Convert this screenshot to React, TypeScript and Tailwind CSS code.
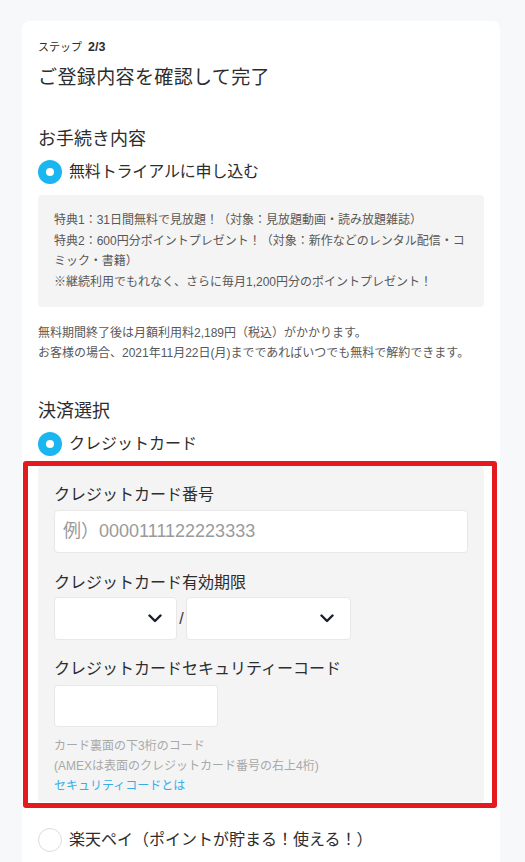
import React from "react";

function Radio({ checked }: { checked: boolean }) {
  return checked ? (
    <span className="flex h-6 w-6 shrink-0 items-center justify-center rounded-full bg-[#19b6f0]">
      <span className="h-2 w-2 rounded-full bg-white" />
    </span>
  ) : (
    <span className="h-6 w-6 shrink-0 rounded-full border border-[#dcdcdc] bg-white" />
  );
}

function Chevron() {
  return (
    <svg width="14" height="9" viewBox="0 0 14 9" fill="none">
      <path d="M1.5 1.5 L7 7 L12.5 1.5" stroke="#1a1d2b" strokeWidth="2.4" strokeLinecap="round" strokeLinejoin="round" />
    </svg>
  );
}

export default function App() {
  return (
    <div
      className="min-h-[862px] bg-[#f7f8fa] pt-[21px]"
      style={{ fontFamily: '"Liberation Sans", "Noto Sans CJK JP", sans-serif' }}
    >
      <div className="ml-[22px] w-[478px] rounded-lg bg-white px-4 pt-[18px] pb-10 text-[#2d2d2d]">
        <div className="flex h-4 items-center gap-[6px] text-[11px] leading-4">
          <span>ステップ</span>
          <span className="text-[12.5px] font-bold">2/3</span>
        </div>
        <h1 className="mt-[9px] text-[19px] leading-7 tracking-[0.02em]">ご登録内容を確認して完了</h1>

        <h2 className="mt-[35px] text-[18px] leading-6">お手続き内容</h2>
        <div className="mt-[9px] flex items-center gap-[7px]">
          <Radio checked />
          <span className="text-[16px] leading-6 tracking-[-0.01em]">無料トライアルに申し込む</span>
        </div>
        <div className="mt-[11px] rounded bg-[#f4f4f4] px-4 py-[15px] text-[12px] leading-[20.5px] text-[#585858]">
          特典1：31日間無料で見放題！（対象：見放題動画・読み放題雑誌）
          <br />
          特典2：600円分ポイントプレゼント！（対象：新作などのレンタル配信・コ
          <br />
          ミック・書籍）
          <br />
          ※継続利用でもれなく、さらに毎月1,200円分のポイントプレゼント！
        </div>
        <p className="mt-4 text-[12px] leading-5 text-[#585858]">
          無料期間終了後は月額利用料2,189円（税込）がかかります。
          <br />
          お客様の場合、2021年11月22日(月)までであればいつでも無料で解約できます。
        </p>

        <h2 className="mt-[36px] text-[18px] leading-6">決済選択</h2>
        <div className="mt-[9px] flex items-center gap-[7px]">
          <Radio checked />
          <span className="text-[16px] leading-6">クレジットカード</span>
        </div>

        <div className="-ml-[15px] -mr-[13px] mt-[5px] rounded-[3px] border-[5px] border-[#e41b1e] pl-[10px] pr-[8px] pb-px">
          <div className="rounded-sm bg-[#f4f4f4] px-4 pt-[17px] pb-[6px]">
            <div className="text-[16px] leading-6">クレジットカード番号</div>
            <div className="mt-[3px] flex h-[43px] items-center rounded border border-[#e8e8e8] bg-white px-2 text-[18px] text-[#9a9a9a]">
              例）0000111122223333
            </div>

            <div className="mt-[18px] text-[16px] leading-6">クレジットカード有効期限</div>
            <div className="mt-[2px] flex items-center">
              <div className="flex h-[43px] w-[123px] items-center justify-end rounded border border-[#e8e8e8] bg-white pr-[14px]">
                <Chevron />
              </div>
              <span className="w-[9px] text-center text-[16px] text-[#333]">/</span>
              <div className="flex h-[43px] w-[165px] items-center justify-end rounded border border-[#e8e8e8] bg-white pr-[16px]">
                <Chevron />
              </div>
            </div>

            <div className="mt-[17px] text-[16px] leading-6">クレジットカードセキュリティーコード</div>
            <div className="mt-[4px] h-[42px] w-[164px] rounded border border-[#e8e8e8] bg-white" />

            <div className="mt-[9px] text-[12px] leading-5 text-[#a8a8a8]">
              カード裏面の下3桁のコード
              <br />
              (AMEXは表面のクレジットカード番号の右上4桁)
            </div>
            <div className="text-[12px] leading-5 text-[#35aee8]">セキュリティコードとは</div>
          </div>
        </div>

        <div className="mt-[20px] flex items-center gap-[7px]">
          <Radio checked={false} />
          <span className="text-[16px] leading-6">楽天ペイ（ポイントが貯まる！使える！）</span>
        </div>
      </div>
    </div>
  );
}
